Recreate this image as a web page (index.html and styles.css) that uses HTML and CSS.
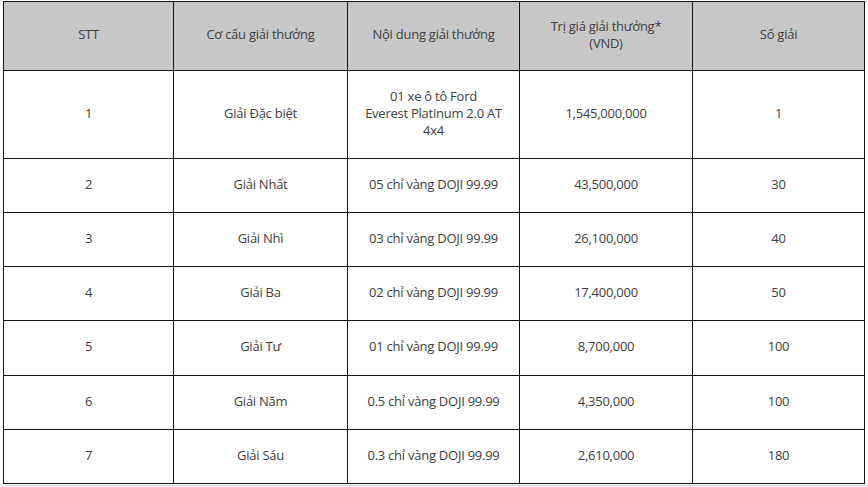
FILE: index.html
```html
<!DOCTYPE html>
<html lang="vi">
<head>
<meta charset="utf-8">
<title>Cơ cấu giải thưởng</title>
<link rel="stylesheet" href="styles.css">
</head>
<body>
<div class="wrap">
<table class="prizes">
  <colgroup>
    <col class="c1"><col class="c2"><col class="c3"><col class="c4"><col class="c5">
  </colgroup>
  <thead>
    <tr class="head">
      <th>STT</th>
      <th>Cơ cấu giải thưởng</th>
      <th>Nội dung giải thưởng</th>
      <th>Trị giá giải thưởng*<br>(VND)</th>
      <th>Số giải</th>
    </tr>
  </thead>
  <tbody>
    <tr class="tall">
      <td>1</td>
      <td>Giải Đặc biệt</td>
      <td class="multi">01 xe ô tô Ford<br>Everest Platinum 2.0 AT<br>4x4</td>
      <td>1,545,000,000</td>
      <td>1</td>
    </tr>
    <tr class="row">
      <td>2</td><td>Giải Nhất</td><td>05 chỉ vàng DOJI 99.99</td><td>43,500,000</td><td>30</td>
    </tr>
    <tr class="row">
      <td>3</td><td>Giải Nhì</td><td>03 chỉ vàng DOJI 99.99</td><td>26,100,000</td><td>40</td>
    </tr>
    <tr class="row">
      <td>4</td><td>Giải Ba</td><td>02 chỉ vàng DOJI 99.99</td><td>17,400,000</td><td>50</td>
    </tr>
    <tr class="row row-x">
      <td>5</td><td>Giải Tư</td><td>01 chỉ vàng DOJI 99.99</td><td>8,700,000</td><td>100</td>
    </tr>
    <tr class="row">
      <td>6</td><td>Giải Năm</td><td>0.5 chỉ vàng DOJI 99.99</td><td>4,350,000</td><td>100</td>
    </tr>
    <tr class="row">
      <td>7</td><td>Giải Sáu</td><td>0.3 chỉ vàng DOJI 99.99</td><td>2,610,000</td><td>180</td>
    </tr>
  </tbody>
</table>
<div class="rule"></div>
</div>
</body>
</html>
```
FILE: styles.css
```css
html, body {
  margin: 0;
  padding: 0;
  background: #ffffff;
}
.wrap {
  padding: 1px 0 0 3px;
}
.prizes {
  border-collapse: collapse;
  table-layout: fixed;
  width: 862px;
  font-family: "Open Sans", "Noto Sans", sans-serif;
  font-size: 13px;
  letter-spacing: -0.25px;
  color: #404040;
}
.c1 { width: 170px; }
.c2 { width: 174px; }
.c3 { width: 172px; }
.c4 { width: 173px; }
.c5 { width: 172px; }
.prizes th,
.prizes td {
  border: 1px solid #111;
  padding: 0 4px 3px;
  text-align: center;
  vertical-align: middle;
  font-weight: normal;
  line-height: 17px;
}
.head th {
  background: #c8c8c8;
  height: 65px;
}
.tall td {
  height: 84px;
}
.multi {
  line-height: 16px;
}
.row td {
  height: 50px;
}
.row-x td {
  height: 51px;
}
.rule {
  height: 1px;
  margin-top: 1px;
  width: 865px;
  background: #d4d4d4;
}
```
